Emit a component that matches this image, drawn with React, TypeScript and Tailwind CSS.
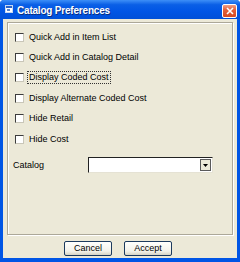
import React from "react";

const options = [
  "Quick Add in Item List",
  "Quick Add in Catalog Detail",
  "Display Coded Cost",
  "Display Alternate Coded Cost",
  "Hide Retail",
  "Hide Cost",
];

function Check({ label, focused }: { label: string; focused?: boolean }) {
  return (
    <div className="flex h-[20.4px] items-center pl-[7px]">
      <span className="h-[9px] w-[9px] border border-t-[#3c3c3c] border-l-[#3c3c3c] border-r-[#c9c6b8] border-b-[#c9c6b8] bg-white" />
      <span
        className={
          "ml-[3px] px-[1px] leading-[11px] " +
          (focused ? "border border-dotted border-[#333]" : "border border-transparent")
        }
      >
        {label}
      </span>
    </div>
  );
}

export default function App() {
  return (
    <div
      className="flex h-[262px] w-[240px] flex-col overflow-hidden rounded-t-[4px] bg-[#0055E5] text-[9px] text-black"
      style={{ fontFamily: '"Liberation Sans", Arial, sans-serif' }}
    >
      {/* title bar */}
      <div className="flex h-[19px] items-start bg-[linear-gradient(180deg,#3d8ff7_0%,#0a5fe6_25%,#0055e5_60%,#0050d8_100%)]">
        <svg className="ml-[5px] mt-[5px]" width="8" height="8" viewBox="0 0 8 8">
          <rect x="0.5" y="0.5" width="7" height="7" fill="#fff" stroke="#c8d8f0" />
          <rect x="1" y="1" width="6" height="2" fill="#2a63c9" />
          <rect x="2" y="4" width="3" height="2" fill="#5b84c7" />
        </svg>
        <span className="ml-[4px] mt-[5px] text-[10px] font-bold leading-[11px] tracking-[-0.2px] text-white [text-shadow:1px_1px_0_#0a2f80]">
          Catalog Preferences
        </span>
        <div className="ml-auto mr-[3px] mt-[4px] flex h-[14px] w-[15px] items-center justify-center rounded-[2px] border border-white bg-[linear-gradient(180deg,#f0a087_0%,#e4603a_40%,#d44a22_100%)]">
          <svg width="8" height="8" viewBox="0 0 8 8">
            <path d="M1 1L7 7M7 1L1 7" stroke="#fff" strokeWidth="1.6" />
          </svg>
        </div>
      </div>

      {/* client */}
      <div className="mx-[3px] mb-[4px] flex flex-1 flex-col bg-[#ECE9D8]">
        <div className="mx-[4px] mt-[3px] flex h-[213px] flex-col border border-[#aca899] pt-[4px] shadow-[inset_1px_1px_0_#fff,1px_1px_0_#fff]">
          {options.map((o, i) => (
            <Check key={o} label={o} focused={i === 2} />
          ))}
          <div className="mt-[8px] flex h-[16px] items-center">
            <span className="ml-[5px] w-[75px]">Catalog</span>
            <div className="flex h-[16px] w-[125px] items-stretch border-l border-t border-l-[#222] border-t-[#222] border-r border-b border-r-[#e5e2d4] border-b-[#e5e2d4] bg-white">
              <div className="flex-1" />
              <div className="my-[1px] mr-[1px] flex w-[11px] items-center justify-center border border-[#5a5a5a] bg-[#ECE9D8]">
                <svg width="5" height="3" viewBox="0 0 5 3">
                  <path d="M0 0H5L2.5 3Z" fill="#000" />
                </svg>
              </div>
            </div>
          </div>
        </div>

        <div className="ml-[61px] mt-[6px] flex gap-[12px]">
          {["Cancel", "Accept"].map((b) => (
            <div
              key={b}
              className="flex h-[15px] w-[48px] items-center justify-center rounded-[2px] border border-[#1c3a5e] bg-[linear-gradient(180deg,#fffffd_0%,#f3f2ea_70%,#d8d4c4_100%)] leading-[11px]"
            >
              {b}
            </div>
          ))}
        </div>
      </div>
    </div>
  );
}
